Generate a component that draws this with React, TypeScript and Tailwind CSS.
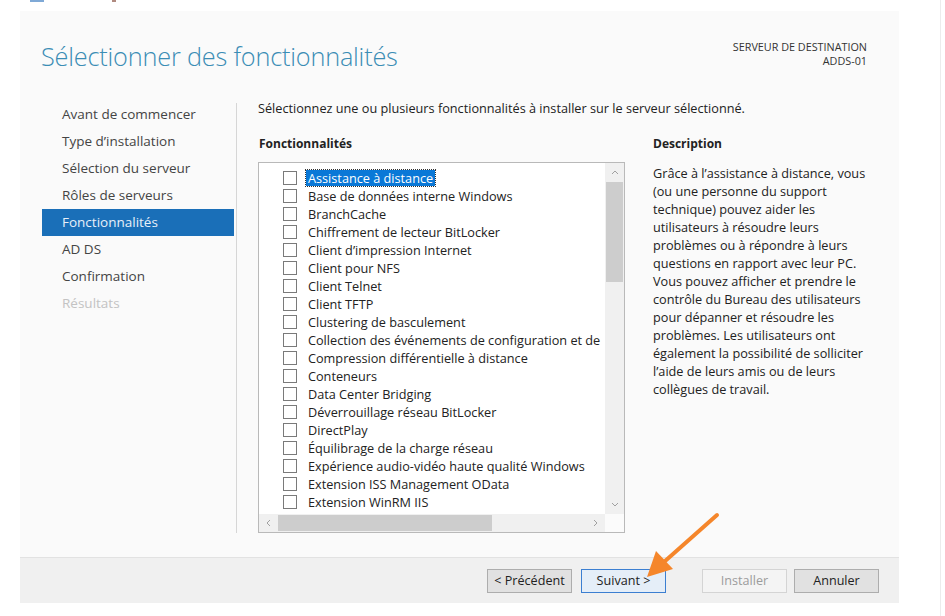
import React from "react";

const NAV = [
	{ label: "Avant de commencer" },
	{ label: "Type d’installation" },
	{ label: "Sélection du serveur" },
	{ label: "Rôles de serveurs" },
	{ label: "Fonctionnalités", active: true },
	{ label: "AD DS" },
	{ label: "Confirmation" },
	{ label: "Résultats", disabled: true },
];

const FEATURES = [
	"Assistance à distance",
	"Base de données interne Windows",
	"BranchCache",
	"Chiffrement de lecteur BitLocker",
	"Client d’impression Internet",
	"Client pour NFS",
	"Client Telnet",
	"Client TFTP",
	"Clustering de basculement",
	"Collection des événements de configuration et de",
	"Compression différentielle à distance",
	"Conteneurs",
	"Data Center Bridging",
	"Déverrouillage réseau BitLocker",
	"DirectPlay",
	"Équilibrage de la charge réseau",
	"Expérience audio-vidéo haute qualité Windows",
	"Extension ISS Management OData",
	"Extension WinRM IIS",
];

const DESCRIPTION = [
	"Grâce à l’assistance à distance, vous",
	"(ou une personne du support",
	"technique) pouvez aider les",
	"utilisateurs à résoudre leurs",
	"problèmes ou à répondre à leurs",
	"questions en rapport avec leur PC.",
	"Vous pouvez afficher et prendre le",
	"contrôle du Bureau des utilisateurs",
	"pour dépanner et résoudre les",
	"problèmes. Les utilisateurs ont",
	"également la possibilité de solliciter",
	"l’aide de leurs amis ou de leurs",
	"collègues de travail.",
];

function Chevron({ dir }: { dir: "up" | "down" | "left" | "right" }) {
	const d = {
		up: "M1 5 L4 2 L7 5",
		down: "M1 2 L4 5 L7 2",
		left: "M5 1 L2 4 L5 7",
		right: "M2 1 L5 4 L2 7",
	}[dir];
	return (
		<svg width="8" height="8" viewBox="0 0 8 8">
			<path d={d} fill="none" stroke="#a0a0a0" strokeWidth="1" />
		</svg>
	);
}

function Button({ children, primary = false, disabled = false }: { children: React.ReactNode; primary?: boolean; disabled?: boolean }) {
	return (
		<div
			className={`w-[85px] h-[24px] flex items-center justify-center text-[12.6px] border
				${primary ? "border-[#3c7fd1] bg-[#e5eef8]" : disabled ? "border-[#d4d4d4] bg-[#f4f4f4]" : "border-[#adadad] bg-[#e1e1e1]"}
				${disabled ? "text-[#9c9c9c]" : "text-[#222]"}`}
		>
			{children}
		</div>
	);
}

export default function App() {
	return (
		<div className="w-[945px] h-[616px] bg-white relative overflow-hidden" style={{ fontFamily: '"Open Sans", "Noto Sans", sans-serif' }}>
			{/* cropped title bar */}
			<div className="h-[11px] flex items-start">
				<div className="ml-[30px] w-[14px] h-[2px] bg-[#7fa9d6]" />
				<div className="ml-[68px] w-[4px] h-[2px] bg-[#b08a80]" />
			</div>

			<div className="ml-[20px] w-[879px] h-[592px] bg-[#fafafa] flex flex-col">
				{/* header */}
				<div className="h-[81px] flex justify-between pl-[21px] pr-[32px]">
					<h1 className="mt-[29px] text-[25.3px] leading-[32px] font-light text-[#3b8db5] tracking-[-0.2px]">
						Sélectionner des fonctionnalités
					</h1>
					<div className="mt-[29px] text-right text-[10.8px] leading-[14px] text-[#333]">
						<div>SERVEUR DE DESTINATION</div>
						<div>ADDS-01</div>
					</div>
				</div>

				{/* body */}
				<div className="flex-1 flex">
					<nav className="w-[216px] pl-[22px] pt-[9px] flex flex-col">
						{NAV.map(item => (
							<div
								key={item.label}
								className={`h-[27px] w-[192px] pl-[20px] flex items-center text-[13.5px]
									${item.active ? "bg-[#1a6fb8] text-[#e8f0f8]" : item.disabled ? "text-[#c3c3c3]" : "text-[#444]"}`}
							>
								{item.label}
							</div>
						))}
					</nav>

					<div className="w-px bg-[#d6d6d6] mt-[11px] mb-[24px]" />

					<div className="flex-1 pl-[21px] pt-[8px] flex flex-col">
						<p className="text-[12.7px] leading-[16px] text-[#222]">
							Sélectionnez une ou plusieurs fonctionnalités à installer sur le serveur sélectionné.
						</p>

						<div className="flex mt-[20px]">
							<div className="w-[367px] flex flex-col">
								<div className="pl-px text-[12px] leading-[16px] font-bold text-[#222]">Fonctionnalités</div>

								{/* list box */}
								<div className="mt-[10px] h-[371px] border border-[#b9b9b9] bg-white flex flex-col">
									<div className="flex-1 flex min-h-0">
										<div className="flex-1 overflow-hidden pt-[6px] pl-[24px]">
											{FEATURES.map((f, i) => (
												<div key={f} className="h-[18px] flex items-center whitespace-nowrap">
													<div className="w-[14px] h-[14px] border border-[#7a7a7a] bg-white shrink-0" />
													<span
														className={`ml-[9px] px-[2px] text-[12.7px] leading-[16px]
															${i === 0 ? "bg-[#0a78d7] text-white outline outline-dotted outline-[#333]" : "text-[#222]"}`}
													>
														{f}
													</span>
												</div>
											))}
										</div>
										<div className="w-[19px] bg-[#f0f0f0] flex flex-col">
											<div className="h-[19px] flex items-center justify-center"><Chevron dir="up" /></div>
											<div className="h-[100px] mx-[1px] bg-[#cdcdcd]" />
											<div className="flex-1" />
											<div className="h-[19px] flex items-center justify-center"><Chevron dir="down" /></div>
										</div>
									</div>
									<div className="h-[18px] flex">
										<div className="flex-1 bg-[#f0f0f0] flex items-center">
											<div className="w-[19px] flex justify-center"><Chevron dir="left" /></div>
											<div className="w-[214px] h-[16px] bg-[#cdcdcd]" />
											<div className="flex-1" />
											<div className="w-[19px] flex justify-center"><Chevron dir="right" /></div>
										</div>
										<div className="w-[19px] bg-[#fbfbfb]" />
									</div>
								</div>
							</div>

							<div className="ml-[28px] flex flex-col">
								<div className="text-[12px] leading-[16px] font-bold text-[#222]">Description</div>
								<div className="mt-[12px] text-[12.7px] leading-[18px] text-[#222]">
									{DESCRIPTION.map(line => (
										<div key={line} className="whitespace-nowrap">{line}</div>
									))}
								</div>
							</div>
						</div>
					</div>
				</div>

				{/* footer */}
				<div className="h-[46px] border-t border-[#e2e2e2] bg-[#f0f0f0] flex justify-end items-start pt-[11px] pr-[20px]">
					<div className="flex gap-[9px]">
						<Button>&lt; Précédent</Button>
						<Button primary>Suivant &gt;</Button>
					</div>
					<div className="ml-[36px] flex gap-[7px]">
						<Button disabled>Installer</Button>
						<Button>Annuler</Button>
					</div>
				</div>
			</div>

			{/* right edge of the next window */}
			<div className="absolute top-0 right-[4px] w-px h-full bg-[#ececec]" />

			{/* orange annotation arrow */}
			<svg className="absolute left-0 top-0 pointer-events-none" width="945" height="616">
				<line x1="717" y1="515" x2="664" y2="562" stroke="#f5862b" strokeWidth="4" strokeLinecap="round" />
				<polygon points="647,577 656,551 673,569" fill="#f5862b" />
			</svg>
		</div>
	);
}
